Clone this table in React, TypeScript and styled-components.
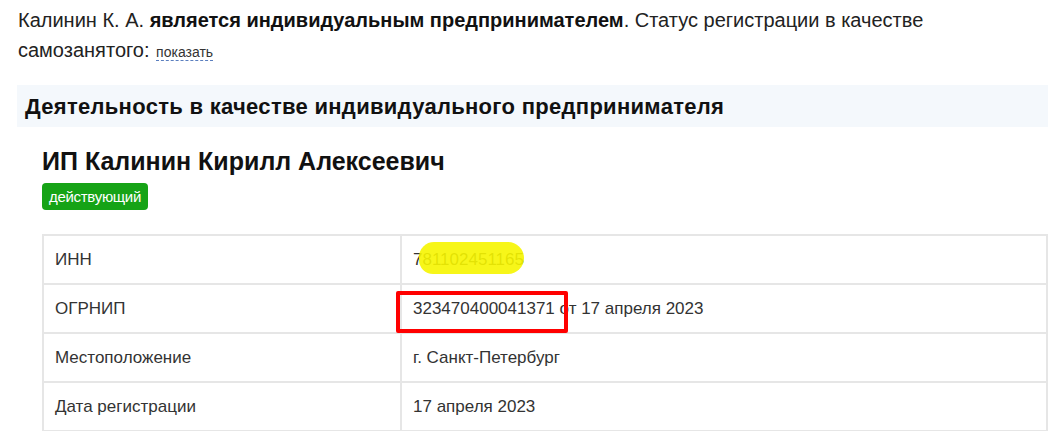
import React from "react";
import styled, { createGlobalStyle } from "styled-components";

const GlobalStyle = createGlobalStyle`
  html, body { margin: 0; padding: 0; background: #ffffff; }
  body { font-family: "Liberation Sans", Arial, sans-serif; }
`;

const Page = styled.div`
  width: 1063px;
  box-sizing: border-box;
  padding: 0 15px 0 17px;
`;

const Intro = styled.p`
  margin: 5px 0 0 1px;
  font-size: 20px;
  line-height: 30px;
  color: #222;
  b { font-weight: 700; color: #111; }
`;

const RevealLink = styled.span`
  font-size: 14px;
  color: #333;
  margin-left: 1px;
  border-bottom: 1px dashed #5b7fbf;
  cursor: pointer;
`;

const SectionBand = styled.h2`
  margin: 18px 0 0;
  padding: 2px 8px 0;
  height: 40px;
  line-height: 40px;
  background: #f4f8fc;
  font-size: 22px;
  letter-spacing: 0.3px;
  font-weight: 700;
  color: #111;
`;

const SectionBody = styled.div`
  padding-left: 25px;
`;

const CompanyName = styled.h3`
  margin: 19px 0 0;
  font-size: 25px;
  line-height: 30px;
  font-weight: 700;
  color: #111;
`;

const StatusBadge = styled.div`
  width: fit-content;
  margin-top: 7px;
  height: 27px;
  line-height: 27px;
  padding: 0 7px;
  border-radius: 4px;
  background: #16a316;
  color: #fff;
  font-size: 15px;
  letter-spacing: -0.3px;
`;

const InfoTable = styled.table`
  margin-top: 24px;
  width: 100%;
  table-layout: fixed;
  border-collapse: collapse;
  font-size: 17px;
  color: #333;
`;

const LabelCol = styled.col`
  width: 358px;
`;

const Cell = styled.td`
  border: 2px solid #e6e6e6;
  height: 49px;
  box-sizing: border-box;
  padding: 0 10px 0 11px;
  line-height: 47px;
  white-space: nowrap;
`;

const Masked = styled.span`
  position: relative;
`;

const Highlight = styled.span`
  position: absolute;
  left: 6px;
  top: -8px;
  width: 105px;
  height: 32px;
  border-radius: 15px 16px 16px 14px;
  background: rgba(246, 245, 0, 0.9);
`;

const Boxed = styled.span`
  position: relative;
  &::after {
    content: "";
    position: absolute;
    left: -17px;
    right: -13px;
    top: -8px;
    bottom: -15px;
    border: 4px solid #f00;
    border-radius: 2px;
  }
`;

const rows: { label: string; value: React.ReactNode }[] = [
  {
    label: "ИНН",
    value: (
      <Masked>
        781102451165
        <Highlight />
      </Masked>
    ),
  },
  {
    label: "ОГРНИП",
    value: (
      <>
        <Boxed>323470400041371</Boxed> от 17 апреля 2023
      </>
    ),
  },
  { label: "Местоположение", value: "г. Санкт-Петербург" },
  { label: "Дата регистрации", value: "17 апреля 2023" },
];

export default function App() {
  return (
    <>
      <GlobalStyle />
      <Page>
        <Intro>
          Калинин К. А. <b>является индивидуальным предпринимателем</b>. Статус регистрации в качестве
          самозанятого: <RevealLink>показать</RevealLink>
        </Intro>
        <SectionBand>Деятельность в качестве индивидуального предпринимателя</SectionBand>
        <SectionBody>
          <CompanyName>ИП Калинин Кирилл Алексеевич</CompanyName>
          <StatusBadge>действующий</StatusBadge>
          <InfoTable>
            <colgroup>
              <LabelCol />
              <col />
            </colgroup>
            <tbody>
              {rows.map((r) => (
                <tr key={r.label}>
                  <Cell>{r.label}</Cell>
                  <Cell>{r.value}</Cell>
                </tr>
              ))}
            </tbody>
          </InfoTable>
        </SectionBody>
      </Page>
    </>
  );
}
